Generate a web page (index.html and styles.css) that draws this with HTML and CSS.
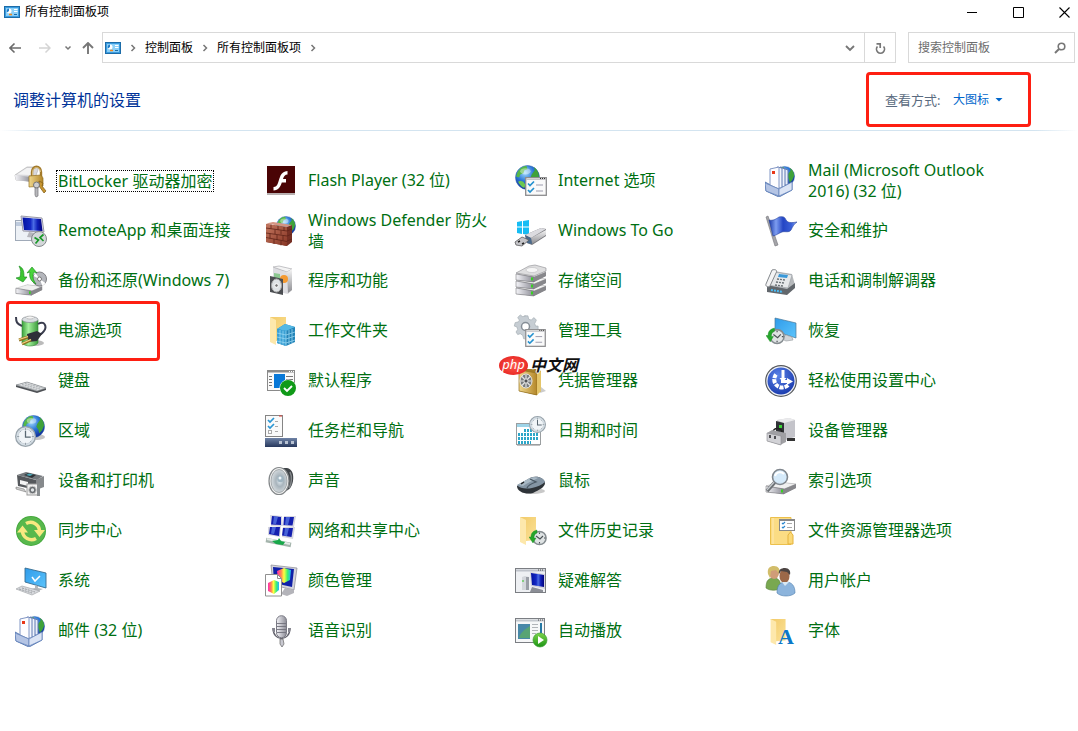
FILE: index.html
```html
<!DOCTYPE html>
<html lang="zh-CN">

<head>
  <meta charset="UTF-8">
  <meta name="viewport" content="width=device-width, initial-scale=1.0">
  <title>所有控制面板项</title>
  <link rel="stylesheet" href="styles.css">
</head>

<body>
  <!-- shared gradients and symbols -->
  <svg class="defs" aria-hidden="true">
    <defs>
      <linearGradient id="metal" x1="0" y1="0" x2="0" y2="1"><stop offset="0" stop-color="#f6f6f6"/><stop offset="1" stop-color="#8c8c90"/></linearGradient>
      <linearGradient id="metal-h" x1="0" y1="0" x2="1" y2="0"><stop offset="0" stop-color="#f4f4f8"/><stop offset="1" stop-color="#8a8a94"/></linearGradient>
      <linearGradient id="screen" x1="0" y1="0" x2="1" y2="0"><stop offset="0" stop-color="#0212a0"/><stop offset=".4" stop-color="#1428c4"/><stop offset=".55" stop-color="#4a6ce4"/><stop offset=".75" stop-color="#1020b8"/><stop offset="1" stop-color="#02027c"/></linearGradient>
      <linearGradient id="sky" x1="0" y1="0" x2="1" y2="1"><stop offset="0" stop-color="#2f9bea"/><stop offset="1" stop-color="#5cc4fb"/></linearGradient>
      <linearGradient id="gold" x1="0" y1="0" x2="1" y2="0"><stop offset="0" stop-color="#f0d78c"/><stop offset="1" stop-color="#b38628"/></linearGradient>
      <linearGradient id="fold" x1="0" y1="0" x2="1" y2="1"><stop offset="0" stop-color="#f2ca68"/><stop offset="1" stop-color="#fbe298"/></linearGradient>
      <linearGradient id="green" x1="0" y1="0" x2="1" y2="0"><stop offset="0" stop-color="#3aa03a"/><stop offset=".4" stop-color="#a4f09c"/><stop offset="1" stop-color="#3c9c3c"/></linearGradient>
      <linearGradient id="flag" x1="0" y1="0" x2="1" y2="0"><stop offset="0" stop-color="#1c3aa8"/><stop offset=".25" stop-color="#7d9df0"/><stop offset=".5" stop-color="#2446c4"/><stop offset=".8" stop-color="#3a60d8"/><stop offset="1" stop-color="#8aa6f0"/></linearGradient>
      <linearGradient id="bar" x1="0" y1="0" x2="0" y2="1"><stop offset="0" stop-color="#6f83a6"/><stop offset="1" stop-color="#26375c"/></linearGradient>
      <linearGradient id="hue" x1="0" y1="0" x2="1" y2="0"><stop offset="0" stop-color="#ff28b4"/><stop offset=".3" stop-color="#ff8a50"/><stop offset=".5" stop-color="#ffff40"/><stop offset=".75" stop-color="#40f070"/><stop offset="1" stop-color="#20b4ff"/></linearGradient>
      <linearGradient id="play" x1="0" y1="0" x2="0" y2="1"><stop offset="0" stop-color="#7bd34a"/><stop offset="1" stop-color="#1c9414"/></linearGradient>
      <linearGradient id="brick" x1="0" y1="0" x2="1" y2="1"><stop offset="0" stop-color="#c47860"/><stop offset="1" stop-color="#873524"/></linearGradient>
      <radialGradient id="sea" cx=".4" cy=".3" r=".7"><stop offset="0" stop-color="#a5dcfc"/><stop offset=".5" stop-color="#2c78d8"/><stop offset="1" stop-color="#10309a"/></radialGradient>
      <radialGradient id="ease" cx=".4" cy=".3" r=".8"><stop offset="0" stop-color="#5a82e8"/><stop offset="1" stop-color="#1434a8"/></radialGradient>
      <radialGradient id="cone" cx=".55" cy=".5" r=".6"><stop offset="0" stop-color="#e4eef4"/><stop offset=".4" stop-color="#a8b4bc"/><stop offset="1" stop-color="#e0e4e6"/></radialGradient>
    </defs>
    <symbol id="globe" viewBox="0 0 24 24">
      <circle cx="12" cy="12" r="11.500" fill="url(#sea)" stroke="#2b5aa8" stroke-width=".5"/>
      <path d="M2 8C4 3 8 1 11 1l1 3-3 1-1 3-3 1-1 3-3-1z" fill="#56b848"/>
      <path d="M16 9l3-4-1-3c3 2 5 5 5 9l-2 5-3 3-1-4-2-3z" fill="#3fa23a"/>
      <path d="M5 15l3 1 2 3-1 3c-3-1-5-4-6-6z" fill="#6cc850"/>
      <ellipse cx="10" cy="6" rx="5" ry="3" fill="#fff" opacity=".4"/>
    </symbol>
    <symbol id="clock" viewBox="0 0 20 20">
      <circle cx="10" cy="10" r="9.400" fill="#d6dfe6" stroke="#98a3ab" stroke-width="1.200"/>
      <circle cx="10" cy="10" r="7" fill="#f1f5f8" stroke="#c0c9d0" stroke-width=".6"/>
      <path d="M10 2v2M10 16v2M2 10h2M16 10h2M4.500 4.500l1 1M15.500 4.500l-1 1M4.500 15.500l1-1M15.500 15.500l-1-1" stroke="#8c969e" stroke-width=".8"/>
      <path d="M10 4.500V10.500H15" fill="none" stroke="#5a6872" stroke-width="1.200"/>
    </symbol>
    <symbol id="small-clock" viewBox="0 0 18 18">
      <circle cx="10.500" cy="10" r="6.600" fill="#dfe3e4" stroke="#858c90" stroke-width="1.500"/>
      <path d="M10.500 4.500v1.500M10.500 14v1.500M15 10h1.500M7 8l4 3 3-3" fill="none" stroke="#4a5054" stroke-width="1.100"/>
      <path d="M8 2C4 3 2 5 2 9H0l4 6 3-5H5c0-3 1-4 3-5z" fill="#26a52c" stroke="#188a20" stroke-width=".4"/>
    </symbol>
    <symbol id="folder" viewBox="0 0 20 30">
      <path d="M1 1H17V24L7 25z" fill="url(#fold)"/>
      <path d="M1 1l6 3V29L1 26z" fill="#fde8ac"/>
    </symbol>
    <symbol id="drive" viewBox="0 0 32 14">
      <path d="M1 6L14 1 31 3v4L19 13 1 11z" fill="#a2a2a6"/>
      <path d="M1 5L14 1 31 3 19 8z" fill="#f0f0f0" stroke="#b0b0b2" stroke-width=".5"/>
      <path d="M1 5L19 8V13L1 11z" fill="url(#metal-h)" stroke="#68686c" stroke-width=".5"/>
      <path d="M19 8L31 3V7L19 13z" fill="#87878b"/>
      <rect x="16" y="8.500" width="2" height="3" fill="#38d022"/>
    </symbol>
    <symbol id="checks" viewBox="0 0 22 19">
      <rect x=".7" y=".7" width="20.600" height="17.600" fill="#fafafa" stroke="#8c8c8e" stroke-width="1.300"/>
      <path d="M1 2.500H21" stroke="#c4c4c8"/>
      <path d="M15 1.500h1M17 1.500h1M19 1.500h1" stroke="#333"/>
      <path d="M3 6.500l2 2 4-4M3 13l2 2 4-4" fill="none" stroke="#2491cf" stroke-width="1.700"/>
      <path d="M11 8h7M11 14h7" stroke="#9a9aac"/>
    </symbol>
    <symbol id="mail" viewBox="0 0 32 32">
      <svg x="9" y="0" width="21" height="23"><use href="#globe"/></svg>
      <path d="M0 17L15 25 27 18V25L14 32 1 26z" fill="#c0cee8" stroke="#5f7fb8"/>
      <path d="M18 3l5 2V20H17z" fill="#e8eefa" stroke="#5f78b0"/>
      <path d="M15 2l5 2V22H14z" fill="#eef3fc" stroke="#5f78b0"/>
      <path d="M12 2l5 1V23H11z" fill="#f4f7fd" stroke="#5f78b0"/>
      <path d="M5 4L14 2V24L5 20z" fill="#fdfdff" stroke="#8196c4"/>
      <rect x="7" y="6" width="3" height="3" fill="#e83818"/>
      <path d="M0 18L14 24V31L1 26z" fill="#b4c4e4" stroke="#5f7fb8" stroke-width=".7"/>
      <path d="M14 24L27 17V25L14 31z" fill="#dbe4f5" stroke="#5f7fb8" stroke-width=".7"/>
    </symbol>
    <symbol id="panel" viewBox="0 0 16 12">
      <rect x=".5" y=".5" width="15" height="11" fill="#7cc8f4" stroke="#1c6ca8"/>
      <rect x="1.500" y="1.500" width="13" height="9" fill="#8cd0f8" stroke="#3a9ce0"/>
      <circle cx="5" cy="5" r="2.500" fill="#fff"/>
      <path d="M5 5V2.500A2.500 2.500 0 0 0 3 6.500z" fill="#1d7cc8"/>
      <path d="M5 8.500h3" stroke="#f28a1c" stroke-width="1.500"/>
      <path d="M10 3.500h3.500M10 5.500h3.500" stroke="#fff"/>
      <path d="M10 8.500h3" stroke="#1c6ca8"/>
    </symbol>
    <symbol id="chevron" viewBox="0 0 8 8">
      <path d="M2.500 1L5.500 4L2.500 7" fill="none" stroke="#777" stroke-width="1.500"/>
    </symbol>
  </svg>

  <div class="titlebar">
    <svg class="panel-icon"><use href="#panel"/></svg>
    <h1>所有控制面板项</h1>
    <div class="window-buttons">
      <button type="button" aria-label="最小化"><svg viewBox="0 0 11 11"><path d="M0 5.500H10" stroke="#000"/></svg></button>
      <button type="button" aria-label="最大化"><svg viewBox="0 0 11 11"><path d="M.5 .5H10.500V10.500H.5z" fill="none" stroke="#000"/></svg></button>
      <button type="button" aria-label="关闭"><svg viewBox="0 0 11 11"><path d="M.5 .5L10.500 10.500M10.500 .5L.5 10.500" stroke="#000" stroke-width="1.100"/></svg></button>
    </div>
  </div>

  <nav class="toolbar">
    <div class="history">
      <button type="button" class="back" aria-label="后退"><svg viewBox="0 0 12 12"><path d="M12 6H1M5.500 1.500L1 6L5.500 10.500" fill="none" stroke="#6c6c6c" stroke-width="1.600"/></svg></button>
      <button type="button" aria-label="前进"><svg viewBox="0 0 12 12"><path d="M0 6H11M6.500 1.500L11 6L6.500 10.500" fill="none" stroke="#d4d4d4" stroke-width="1.500"/></svg></button>
      <button type="button" class="recent" aria-label="最近位置"><svg viewBox="0 0 12 12"><path d="M3.500 4.500L6 7L8.500 4.500" fill="none" stroke="#777" stroke-width="1.500"/></svg></button>
      <button type="button" aria-label="上移"><svg viewBox="0 0 12 12"><path d="M6 12V1M1 6L6 1L11 6" fill="none" stroke="#777" stroke-width="1.900"/></svg></button>
    </div>
    <div class="address">
      <svg class="panel-icon"><use href="#panel"/></svg>
      <svg class="chevron"><use href="#chevron"/></svg>
      <a href="#">控制面板</a>
      <svg class="chevron"><use href="#chevron"/></svg>
      <a href="#">所有控制面板项</a>
      <svg class="chevron"><use href="#chevron"/></svg>
      <button type="button" class="drop" aria-label="历史记录"><svg viewBox="0 0 12 12"><path d="M2 4L6 8L10 4" fill="none" stroke="#777" stroke-width="1.900"/></svg></button>
      <button type="button" class="refresh" aria-label="刷新"><svg viewBox="0 0 12 12"><path d="M3.500 4.500A4 4 0 1 0 9.500 4.500" fill="none" stroke="#777" stroke-width="1.700"/><path d="M2.500 1.800H6.200V6" fill="none" stroke="#777" stroke-width="1.700"/></svg></button>
    </div>
    <form class="search">
      <input type="text" placeholder="搜索控制面板" aria-label="搜索控制面板">
      <button type="button" aria-label="搜索"><svg viewBox="0 0 12 12"><circle cx="7.500" cy="4.500" r="3.300" fill="none" stroke="#777" stroke-width="1.600"/><path d="M5 7L1 11" stroke="#777" stroke-width="2"/></svg></button>
    </form>
  </nav>

  <header class="heading">
    <h2>调整计算机的设置</h2>
    <div class="view-by">
      <label for="view">查看方式:</label>
      <select id="view">
        <option>大图标</option>
        <option>小图标</option>
        <option>类别</option>
      </select>
    </div>
  </header>

  <main class="items">
    <a class="item focused" href="#">
      <svg class="icon" viewBox="0 0 32 32"><path d="M0 10L12 2H24L19 16 1 15z" fill="#d8d8dc" stroke="#aaa" stroke-width=".6"/><path d="M0 10l16 2v5L1 15z" fill="url(#metal-h)"/><path d="M2 9.500L12 3h8l-4 7z" fill="#f3f3f4"/><path d="M17 12V7c0-7 9-7 9 0v5" fill="none" stroke="#a37a2a" stroke-width="2.400"/><path d="M17.500 12V7c0-6 8-6 8 0" fill="none" stroke="#e4cd90" stroke-width=".8"/><path d="M14 11l12-1 2 3v8l-14 1z" fill="url(#gold)" stroke="#94701f" stroke-width=".7"/><path d="M24 16l4 2-1 3 4 5-2 2-5-7z" fill="#c79530" stroke="#7c5a14" stroke-width=".7"/><circle cx="21.500" cy="20" r="3" fill="#cfcfcf" stroke="#747478"/><path d="M20 23h3v8l-2 1-1-2z" fill="#b8b8bc" stroke="#747478" stroke-width=".7"/></svg>
      <span>BitLocker 驱动器加密</span>
    </a>
    <a class="item" href="#">
      <svg class="icon" viewBox="0 0 32 32"><rect x="2" y="2" width="28" height="28" fill="#b8b0b0"/><rect x="2" y="1" width="28" height="27" fill="#4a0405"/><path d="M22.500 6C15 6.500 15 13 13 18c-1 2.500-2 4-4.500 4v3.500c5-.2 7-4 8.300-8H21V14h-3c1-3 2-4.400 4.500-4.500z" fill="#fff"/></svg>
      <span>Flash Player (32 位)</span>
    </a>
    <a class="item" href="#">
      <svg class="icon" viewBox="0 0 32 32"><use href="#globe" width="25" height="25"/><use href="#checks" x="10" y="12" width="22" height="19"/></svg>
      <span>Internet 选项</span>
    </a>
    <a class="item" href="#">
      <svg class="icon" viewBox="0 0 32 32"><use href="#mail"/></svg>
      <span>Mail (Microsoft Outlook 2016) (32 位)</span>
    </a>

    <a class="item" href="#">
      <svg class="icon" viewBox="0 0 32 32"><rect x=".5" y="5.500" width="22" height="20" fill="#edf1f6" stroke="#a0aab8"/><path d="M1 8h7M1 10h7" stroke="#8fa4c4"/><path d="M6 1L27 3 29 17 8 16z" fill="#dde" stroke="#9a9aa6"/><path d="M7.500 2.500L26 4 27.500 16 9 15z" fill="url(#screen)"/><path d="M14 17l6 1v5l-8-1z" fill="#b6b6bc"/><circle cx="24" cy="24" r="7.500" fill="#d4d8da" stroke="#85898c"/><path d="M19.500 22.500l4 2.500-3 3.500M28.500 19.500l-3.500 3 3.500 3.500" fill="none" stroke="#189828" stroke-width="1.700"/></svg>
      <span>RemoteApp 和桌面连接</span>
    </a>
    <a class="item" href="#">
      <svg class="icon" viewBox="0 0 32 32"><use href="#globe" x="11" y="1" width="20" height="20"/><path d="M1 9L21 12 27 10V27L22 31 1 27z" fill="#763024"/><path d="M1 9L22 12V31L1 27z" fill="url(#brick)"/><path d="M1 8.500L8 7 27 10 22 12z" fill="#d49482"/><path d="M1 13l21 3M1 18l21 3M1 22.500l21 4M6 9.500v4M13 11v4M19 12v4M10 14.500v4.500M16 15.500v4M5 18.500v5M12 20v5M18 20.500v5M9 24v5M16 25.500v5M22 16l5-2M22 21l5-2M22 26l5-2" stroke="#5f2318" stroke-width=".8"/></svg>
      <span>Windows Defender 防火墙</span>
    </a>
    <a class="item" href="#">
      <svg class="icon" viewBox="0 0 32 32"><path d="M2 7l5-1v5.500H2zM8 6l6-1v6.500H8zM2 12.500h5V19l-5-1zM8 12.500h6V20l-6-1z" fill="#16bdf4"/><path d="M10 20L26 13l5 1v7l-14 9-5-2z" fill="#77777c"/><path d="M10 20L26 13l5 1-15 9z" fill="#dcdce0"/><path d="M16 23l15-8v5l-14 9z" fill="url(#metal)"/><path d="M10 20l6 3 1 6-5-1z" fill="#4a6a8c"/><path d="M0 27l7-5 7 3-7 6-6-1z" fill="#c4c4c8" stroke="#5d5d60" stroke-width=".8"/><path d="M3 27l2-1M7 29l2-1" stroke="#222" stroke-width="1.500"/></svg>
      <span>Windows To Go</span>
    </a>
    <a class="item" href="#">
      <svg class="icon" viewBox="0 0 32 32"><path d="M1 2l2-1 10 29-3 1z" fill="#a4a4a8" stroke="#74747a" stroke-width=".6"/><path d="M4 5c4 1 7-1 10-3 4-1 6 0 7 3 2 3 5 3 11 2-3 2-4 4-6 8-2 3-6 1-9 2-3 1-5 3-9 4z" fill="url(#flag)" stroke="#23409c" stroke-width=".6"/></svg>
      <span>安全和维护</span>
    </a>

    <a class="item" href="#">
      <svg class="icon" viewBox="0 0 32 32"><use href="#drive" y="18" width="28" height="14"/><circle cx="24.500" cy="14" r="7" fill="#b4b6bc" stroke="#808084"/><path d="M24.500 14l-6-3 2-3zM24.500 14l6 4-3 3z" fill="#fff"/><circle cx="24.500" cy="14" r="2" fill="#fff" stroke="#777"/><path d="M4 1c5 2 5 7 5 11h3L8 17 1 13l4-1c1-4 1-7-1-11z" fill="#3cc630" stroke="#14861a" stroke-width=".6"/><path d="M17 2l5 6-3-1c-2 4-1 8 2 12-6-3-7-8-6-12l-3 1z" fill="#4ad43c" stroke="#14861a" stroke-width=".6"/></svg>
      <span>备份和还原(Windows 7)</span>
    </a>
    <a class="item" href="#">
      <svg class="icon" viewBox="0 0 32 32"><path d="M8 3L18 2l9 3v20l-4 4-9-2z" fill="#dcdce0"/><path d="M8 2L14 1 27 4 22 7z" fill="#f4f4f4" stroke="#a0a0a4" stroke-width=".6"/><path d="M22 7l5-3v21l-4 3z" fill="url(#metal)"/><path d="M8 4l14 3v19l-14-3z" fill="#dedee2"/><path d="M9 8l6 1v6H9z" fill="#8cc890"/><circle cx="19" cy="14" r="4" fill="#f49a32"/><path d="M5 11l13 3v16l-13-3z" fill="#4c4e52"/><ellipse cx="11.500" cy="20.500" rx="5" ry="6.500" fill="#dfe3e5" stroke="#aaa"/><circle cx="11.500" cy="20.500" r="1.800" fill="#777" stroke="#fff"/></svg>
      <span>程序和功能</span>
    </a>
    <a class="item" href="#">
      <svg class="icon" viewBox="0 0 32 32"><use href="#drive" y="18" width="32" height="14"/><use href="#drive" y="11" width="32" height="14"/><use href="#drive" y="4" width="32" height="14"/><path d="M1 8L14 1 20 0 31 3V6L19 11z" fill="#dededf" stroke="#8c8c90" stroke-width=".6"/><ellipse cx="17" cy="5" rx="6" ry="2.500" fill="#f6f6f6" stroke="#b4b4b8" stroke-width=".5"/></svg>
      <span>存储空间</span>
    </a>
    <a class="item" href="#">
      <svg class="icon" viewBox="0 0 32 32"><path d="M9 6L27 9l3 11-9 8-19-4z" fill="#b6b9bc"/><path d="M2 20l20 4 8-6v5l-8 7-20-3z" fill="#62676c"/><path d="M9 7l18 3-4 13L2 20z" fill="#e6e8ea" stroke="#989da2" stroke-width=".6"/><path d="M7 5c3-1 6 0 4 3L5 21c-2 2-5 0-4-2z" fill="#f4f4f5" stroke="#84888c"/><path d="M14 9l9 1-1 3-9-1z" fill="#3a98d8"/><path d="M12 14l8 1M11 17l8 1M10 20l8 1" stroke="#6d7478" stroke-width="1.400" stroke-dasharray="2 1"/><path d="M6 25l12 2" stroke="#4cbcf4" stroke-width="2" stroke-dasharray="2 1"/></svg>
      <span>电话和调制解调器</span>
    </a>

    <a class="item marked" href="#">
      <svg class="icon" viewBox="0 0 32 32"><ellipse cx="20" cy="28" rx="9" ry="3" fill="#bbb"/><path d="M7 5H23V28C20 32 10 32 7 28z" fill="url(#green)" stroke="#348c38" stroke-width=".6"/><ellipse cx="15" cy="4.500" rx="8" ry="3" fill="#d9dde0" stroke="#858b90" stroke-width=".7"/><ellipse cx="15" cy="2.500" rx="4" ry="1.500" fill="#f4f4f4" stroke="#999" stroke-width=".5"/><path d="M1 2c0 5 1 7 6 9M23 9c7-4 9 3 6 7-1 2-3 3-5 4" fill="none" stroke="#3a3d4e" stroke-width="2"/><path d="M12 19l10-3 5 3-5 7-9 1z" fill="#2e3038"/><path d="M4 25l9-3M7 29l9-4" stroke="#92701e" stroke-width="3"/><path d="M4 24.500l9-3M7 28.500l9-4" stroke="#f0d488" stroke-width="1.300"/></svg>
      <span>电源选项</span>
    </a>
    <a class="item" href="#">
      <svg class="icon" viewBox="0 0 32 32"><use href="#folder" x="4" y="1" width="20" height="30"/><path d="M12 14l8-5 10 3v15l-9 4-9-3z" fill="#2484b8"/><path d="M12 14l8-5 10 3-9 4z" fill="#54b8e4"/><path d="M12 14l9 2v15l-9-3z" fill="#3aa0d4"/><path d="M12 18l9 2 9-3M12 22l9 2 9-3M12 26l9 2 9-3M15 15v14M18 15.500v14M24 15v14M27 14v14M21 16v15" fill="none" stroke="#a0dcf6" stroke-width=".7"/></svg>
      <span>工作文件夹</span>
    </a>
    <a class="item" href="#">
      <svg class="icon" viewBox="0 0 32 32"><path d="M10 1h4l1 4 3 1 3-3 3 3-2 4 1 3h3v4l-3 1-2 3 2 3-3 2-4-2-3 1-1 3h-3l-1-4-3-2-3 1-2-3 2-3-1-3-3-1 1-4 4-1 1-2-2-3 3-3 3 2 3-1z" transform="translate(1 0) scale(.85)" fill="#c6cdd3" stroke="#a4acb3" stroke-width=".8"/><circle cx="10.500" cy="11.500" r="4" fill="#fff" stroke="#858e96" stroke-width="1.500"/><use href="#checks" x="9" y="14" width="23" height="18"/></svg>
      <span>管理工具</span>
    </a>
    <a class="item" href="#">
      <svg class="icon" viewBox="0 0 32 32"><path d="M10 3L31 8V23L10 16z" fill="url(#sky)" stroke="#4a7898" stroke-width=".7"/><path d="M21 20l6 2 1 3-7 1-4-2z" fill="#d0d4d8" stroke="#959a9e" stroke-width=".6"/><use href="#small-clock" x="1" y="11" width="19" height="19"/></svg>
      <span>恢复</span>
    </a>

    <a class="item" href="#">
      <svg class="icon" viewBox="0 0 32 32"><path d="M1 20l11-3 19 6v2l-9 3L1 22z" fill="#4d5054"/><path d="M1 20l11-3 19 6-9 3z" fill="#dcdee0" stroke="#8a8e92" stroke-width=".6"/><path d="M4 20.500l18 4.500M7 19.500l18 4.500M10 18.500l18 4.500" stroke="#a6aaae" stroke-width=".9" stroke-dasharray="2 .8"/></svg>
      <span>键盘</span>
    </a>
    <a class="item" href="#">
      <svg class="icon" viewBox="0 0 32 32"><rect x="2.500" y="5.500" width="27" height="20" fill="#fafafa" stroke="#8a8a8a"/><path d="M2 6.500h28" stroke="#8a8a8a" stroke-width="2"/><path d="M24 6.500h1M26 6.500h1M28 6.500h1" stroke="#fff"/><path d="M4 11.500h3M4 14.500h3M4 17.500h3M4 20.500h3M21 11.500h7M21 14.500h7" stroke="#777"/><rect x="9" y="9" width="11" height="14" fill="#0878d8"/><circle cx="23" cy="23" r="8.500" fill="#fff"/><circle cx="23" cy="23" r="8" fill="#109a18"/><path d="M19 23l3 3 5-5" fill="none" stroke="#fff" stroke-width="1.900"/></svg>
      <span>默认程序</span>
    </a>
    <a class="item" href="#">
      <svg class="icon" viewBox="0 0 32 32"><path d="M26 22l5 4-6 2z" fill="#ccc"/><path d="M4 4H22l4 2v20l-5 4-17-4z" fill="#a27d26"/><path d="M4 5l18 3v22L4 26z" fill="url(#gold)" stroke="#94701f" stroke-width=".7"/><path d="M22 8l4-2v20l-4 4z" fill="#e4c56a"/><ellipse cx="11" cy="16" rx="6" ry="7" fill="#777b7d" stroke="#e8e8e8"/><path d="M11 10v12M5.500 16h11M7 11.500l8 9M15 11.500l-8 9" stroke="#e4e4e4" stroke-width="1.200"/><circle cx="11" cy="16" r="2" fill="#505356" stroke="#fff" stroke-width=".6"/></svg>
      <span>凭据管理器</span>
    </a>
    <a class="item" href="#">
      <svg class="icon" viewBox="0 0 32 32"><circle cx="16" cy="16" r="15.300" fill="#f0f2f8" stroke="#55585c" stroke-width="1.200"/><circle cx="16" cy="16" r="13.500" fill="url(#ease)"/><path d="M11 9.500A8 8 0 1 0 23.500 19.500" fill="none" stroke="#fff" stroke-width="4" stroke-dasharray="4 1"/><path d="M16.500 5h3v8h2l-3.500 4-3.500-4h2z" fill="#fff"/><path d="M16 15h6v-2l6 3.500-6 3.500v-2h-6z" fill="#fff"/></svg>
      <span>轻松使用设置中心</span>
    </a>

    <a class="item" href="#">
      <svg class="icon" viewBox="0 0 32 32"><ellipse cx="22" cy="22" rx="8" ry="3" fill="#c4c4c4"/><use href="#globe" x="7" y="0" width="23" height="23"/><use href="#clock" x="0" y="11" width="21" height="21"/></svg>
      <span>区域</span>
    </a>
    <a class="item" href="#">
      <svg class="icon" viewBox="0 0 32 32"><rect x=".5" y=".5" width="17" height="21" fill="#fafafa" stroke="#858585"/><path d="M14 1h3" stroke="#d83a32"/><path d="M3 5l2 2 4-4M3 11l2 2 4-4" fill="none" stroke="#2a96d4" stroke-width="1.700"/><path d="M10 6.500h3M10 11.500h3M10 16.500h3" stroke="#aaa"/><rect x="3.500" y="15.500" width="3" height="3" fill="#fff" stroke="#aaa"/><rect y="23" width="32" height="9" fill="url(#bar)"/><path d="M14 27.500h3M20 27.500h3M26 27.500h3" stroke="#b8c2d2" stroke-width="3"/></svg>
      <span>任务栏和导航</span>
    </a>
    <a class="item" href="#">
      <svg class="icon" viewBox="0 0 32 32"><rect x="1.500" y="8.500" width="24" height="21" fill="#fff" stroke="#9a9ea0"/><path d="M2 30.500h23" stroke="#c2c2c2"/><rect x="2" y="9" width="23" height="3" fill="#9ed4e8"/><path d="M9 15.500h13M3 19.500h20M3 23.500h20M3 27.500h13" stroke="#2ca6c8" stroke-width="3" stroke-dasharray="2 1"/><use href="#clock" x="14" y="1" width="17" height="17"/></svg>
      <span>日期和时间</span>
    </a>
    <a class="item" href="#">
      <svg class="icon" viewBox="0 0 32 32"><path d="M12 5l12-2 6 2v16l-8 4-10-4z" fill="#d0d0d4"/><path d="M19 8l11-3v17l-11 3z" fill="#c4c4ca"/><path d="M12 5l12-2 6 2-11 3z" fill="#eaeaec"/><path d="M11 6l8 2v12l-8-2z" fill="#303236"/><rect x="14" y="10" width="3" height="3" fill="#3cd438"/><path d="M22 23h8v3h-8z" fill="#333"/><path d="M8 17c0-5 9-4 9 0" fill="none" stroke="#222" stroke-width="1.500"/><path d="M2 18l5-3 14 3v9l-6 3-13-4z" fill="#a0a0a4"/><path d="M2 18l14 3v9L2 26z" fill="#d2d2d6" stroke="#8b8b90" stroke-width=".6"/><path d="M5 20v3M10 21v3" stroke="#4c4c50" stroke-width="2"/></svg>
      <span>设备管理器</span>
    </a>

    <a class="item" href="#">
      <svg class="icon" viewBox="0 0 32 32"><path d="M2 10L11 7 28 11 22 15z" fill="#74787c"/><path d="M2 10l19 5v10L3 21z" fill="#55585c"/><path d="M21 15l8-4v11l-8 3z" fill="#86898c"/><path d="M9 10l4-2 8 2-4 3z" fill="#2f3438"/><path d="M11 10l3-1.500 4 1-3 1.500z" fill="#4ca8b8"/><path d="M5 15l8 2v4l-8-2z" fill="#f4f4f4"/><path d="M1 22l8 2 2 3-10-3z" fill="#d0d0d0" stroke="#666" stroke-width=".5"/><rect x="12" y="19" width="12" height="11" fill="#f0f0f0" stroke="#999"/><rect x="22" y="18" width="3" height="13" fill="#898d90"/><circle cx="17.500" cy="25" r="3.800" fill="#686c70" stroke="#ccc"/><circle cx="17.500" cy="25" r="1.700" fill="#e0e4e6"/></svg>
      <span>设备和打印机</span>
    </a>
    <a class="item" href="#">
      <svg class="icon" viewBox="0 0 32 32"><path d="M14 3h8c5 1 7 6 6 13-1 6-4 9-7 10l-5 2z" fill="#404448"/><path d="M25 7c2 4 2 12-1 16" fill="none" stroke="#85898c" stroke-width="1.500"/><ellipse cx="14" cy="16" rx="10" ry="13.500" fill="#f0f0f0" stroke="#84888a" stroke-width="1.200"/><ellipse cx="14" cy="16" rx="8" ry="11.500" fill="url(#cone)" stroke="#8a9094" stroke-width=".7"/><circle cx="15.500" cy="14" r="3.200" fill="#9fb4c0"/><circle cx="15" cy="13" r="1.500" fill="#eef6fa"/></svg>
      <span>声音</span>
    </a>
    <a class="item" href="#">
      <svg class="icon" viewBox="0 0 32 32"><ellipse cx="18" cy="26" rx="12" ry="3" fill="#c8c8c8"/><path d="M2 21L15 13c7-3 14 0 15 5 0 4-6 7-12 10C11 30 2 27 2 21z" fill="#2e3338"/><path d="M2 20L15 13c7-3 14 0 15 4-3 3-8 5-13 6C12 24 5 24 2 20z" fill="#8495a4"/><path d="M4 19l11-6c3-1 6-1 8 0-4 2-11 5-15 8-2 0-4-1-4-2z" fill="#a8b8c4"/><path d="M12 23c1-3 6-5 9-6l-6-3" fill="none" stroke="#4a5864" stroke-width="1.300"/><path d="M6 19l3-2" stroke="#222" stroke-width="1.500"/></svg>
      <span>鼠标</span>
    </a>
    <a class="item" href="#">
      <svg class="icon" viewBox="0 0 32 32"><use href="#drive" y="16" width="32" height="14"/><path d="M10 17l-8 9" stroke="#6c7074" stroke-width="3.500"/><path d="M10 16l-8 9" stroke="#c8ccd0" stroke-width="1.200"/><circle cx="15" cy="12" r="7.500" fill="#d0e8fa" fill-opacity=".9" stroke="#80878e" stroke-width="1.600"/><path d="M10 11c1-4 6-5 9-2" fill="none" stroke="#fff" stroke-width="2"/></svg>
      <span>索引选项</span>
    </a>

    <a class="item" href="#">
      <svg class="icon" viewBox="0 0 32 32"><circle cx="16" cy="16" r="15" fill="#45a83d"/><circle cx="16" cy="16" r="14" fill="#58b84c"/><path d="M11 8.500A9 9 0 0 1 24.500 16" fill="none" stroke="#f8e880" stroke-width="3.500"/><path d="M21 23.500A9 9 0 0 1 7.500 16" fill="none" stroke="#f8e880" stroke-width="3.500"/><path d="M2 17.500h11L7.500 10.500zM19 15h11l-5.500 7z" fill="#f8e880"/></svg>
      <span>同步中心</span>
    </a>
    <a class="item" href="#">
      <svg class="icon" viewBox="0 0 32 32"><path d="M5 0l12 1 1 10-12 0zM19 1l12 0-2 11-11-1zM3 12l13-1-1 11-12-2zM18 12l12 0-2 12-11-2z" fill="#d6d6e0"/><path d="M7 1l9 1v8l-10-.5zM19 2l10 0-1.500 8.500-9-.5zM5 12l10 0-1 9-10-2zM18 13l10 0-1.500 9-9.500-1.500z" fill="#1420b0"/><path d="M9 1.500l4 .3L11 9l-3-.2zM21 2l4 0-2 8-3 0zM7 12l4 0-2 7-3-.5zM20 13l4 0-2 8-3-.5z" fill="#5c80e8" opacity=".7"/><path d="M1 25l25 5" stroke="#a4b4ac" stroke-width="4.500"/><path d="M2 24l23 5" stroke="#e4ece8" stroke-width="2"/><path d="M7 26l6-1 1-2 2 3 4 1-2 3-7-1z" fill="#18a84a"/></svg>
      <span>网络和共享中心</span>
    </a>
    <a class="item" href="#">
      <svg class="icon" viewBox="0 0 32 32"><use href="#folder" x="4" y="1" width="20" height="30"/><use href="#small-clock" x="14" y="13" width="18" height="18"/></svg>
      <span>文件历史记录</span>
    </a>
    <a class="item" href="#">
      <svg class="icon" viewBox="0 0 32 32"><path d="M5.500 2.500H26V29.500H5.500z" fill="#fbdc84" stroke="#ecc04c"/><path d="M8 3v26" stroke="#ffeab4"/><path d="M23 29V20l2.500-3 2.500 3v9z" fill="#fbd978" stroke="#e4b33c"/><rect x="14.500" y="4.500" width="15" height="11" fill="#fff" stroke="#888"/><path d="M14 5h16" stroke="#888" stroke-width="2"/><path d="M17 8l1 1 2-2M17 12l1 1 2-2" fill="none" stroke="#2a88d0" stroke-width="1.200"/><path d="M22 8.500h5M22 12.500h5" stroke="#aaa"/></svg>
      <span>文件资源管理器选项</span>
    </a>

    <a class="item" href="#">
      <svg class="icon" viewBox="0 0 32 32"><path d="M10 3L31 8V23L10 17z" fill="url(#sky)" stroke="#376c90" stroke-width=".9"/><path d="M17 12l3 4 5-5" fill="none" stroke="#fff" stroke-width="1.500"/><path d="M20 20l3 1v2l5 1-5 2-7-2 4-1z" fill="#b4b8bc"/><path d="M1 24l6-3 18 5-8 4z" fill="#d8dade" stroke="#989ca0" stroke-width=".6"/><path d="M4 24l13 4M7 23l13 4" stroke="#9ca0a4" stroke-dasharray="2 1"/></svg>
      <span>系统</span>
    </a>
    <a class="item" href="#">
      <svg class="icon" viewBox="0 0 32 32"><path d="M6 0L32 3 29 25 8 20z" fill="#d4d4dc" stroke="#8a8a92" stroke-width=".7"/><path d="M8 2L29 4 27 22 9 18z" fill="#1020a8"/><path d="M12 6l7-3 7 2-1 10-6 3-6-3z" fill="url(#hue)"/><path d="M20 23l9 2v3l-7 3-6-2z" fill="#b4b4ba"/><path d="M.5 9.500h12l4 4v17.500H.5z" fill="#fff" stroke="#909090"/><path d="M12.500 9.500v4h4" fill="none" stroke="#909090"/><path d="M3 18l6-3 5 2v8l-5 4-6-3z" fill="url(#hue)"/></svg>
      <span>颜色管理</span>
    </a>
    <a class="item" href="#">
      <svg class="icon" viewBox="0 0 32 32"><rect x=".5" y="3.500" width="30" height="24" fill="#eef0f3" stroke="#7b7e83"/><path d="M1 5.500h29" stroke="#bfc3ca" stroke-width="2"/><path d="M23 5h1M25 5h1M27 5h1" stroke="#444"/><path d="M15 7L30 9V24L16 21z" fill="#d4d4dc"/><path d="M16 8l13 2v12l-12-2z" fill="url(#screen)"/><path d="M7 12l3-1 4 1v13H7z" fill="#d4d7dc"/><path d="M11 12l3 0v13h-3z" fill="#9a9ea6"/><path d="M8 15v2" stroke="#34c224"/><path d="M17 22l11 3v2H15z" fill="#8b8e96"/></svg>
      <span>疑难解答</span>
    </a>
    <a class="item" href="#">
      <svg class="icon" viewBox="0 0 32 32"><path d="M1 23c0-8 3-10 8-10s7 4 7 10c-4 3-11 3-15 0z" fill="#79a850" stroke="#55803a" stroke-width=".6"/><ellipse cx="9" cy="8" rx="5" ry="6" fill="#d09c78"/><path d="M3 9C2 3 5 1 9 1s7 3 5 8l-3-4-5 1-1 7z" fill="#d2bd6a"/><path d="M12 28c0-9 4-11 9-11 6 0 9 4 9 11-4 4-14 4-18 0z" fill="#8cb4dc" stroke="#4c7cac" stroke-width=".6"/><ellipse cx="19.500" cy="11" rx="5" ry="7" fill="#9c6848"/><path d="M14 9c-1-4 2-6 6-6s6 3 5 7l-3-3-6-1z" fill="#4c4442"/><path d="M17 17l3 4 4-4z" fill="#d8e8f4"/></svg>
      <span>用户帐户</span>
    </a>

    <a class="item" href="#">
      <svg class="icon" viewBox="0 0 32 32"><use href="#mail"/></svg>
      <span>邮件 (32 位)</span>
    </a>
    <a class="item" href="#">
      <svg class="icon" viewBox="0 0 32 32"><path d="M8 13c0 14 17 14 17 0" fill="none" stroke="#64646e" stroke-width="1.400"/><path d="M7 13h3v4H8zM23 13h3l-1 4h-2z" fill="#85858f"/><rect x="11.500" y=".7" width="10" height="22" rx="5" fill="url(#metal-h)" stroke="#7a7a84"/><path d="M12 8.500h9M12 11.500h9M12 14.500h9M12 17.500h9" stroke="#72727c" stroke-width=".9"/><path d="M15 24h3l1 5-2 3-2-3z" fill="#c8c8d0" stroke="#666" stroke-width=".7"/></svg>
      <span>语音识别</span>
    </a>
    <a class="item" href="#">
      <svg class="icon" viewBox="0 0 32 32"><rect x=".5" y="3.500" width="29" height="24" fill="#f6f7f8" stroke="#7b7e83"/><path d="M1 5.500h28" stroke="#c4c8ce" stroke-width="2"/><path d="M23 5h1M25 5h1M27 5h1" stroke="#444"/><rect x="3" y="9" width="12" height="15" fill="#4888a8"/><path d="M4 23c1-5 6-9 11-12v12z" fill="#58a474"/><path d="M17 9.500h6M17 12.500h6M17 15.500h6M17 18.500h4" stroke="#b0b4b8"/><path d="M26 8v10" stroke="#2678a4" stroke-width="2"/><circle cx="25" cy="25" r="7" fill="url(#play)" stroke="#3a9c30" stroke-width=".7"/><path d="M23 21l6 4-6 4z" fill="#fff"/></svg>
      <span>自动播放</span>
    </a>
    <a class="item" href="#">
      <svg class="icon" viewBox="0 0 32 32"><use href="#folder" x="4" y="3" width="20" height="28"/><text class="font-letter" x="13" y="29">A</text></svg>
      <span>字体</span>
    </a>
  </main>

  <div class="watermark"><span class="oval">php</span><span class="site">中文网</span></div>
</body>

</html>
```
FILE: styles.css
```css
*,
*::before,
*::after {
  box-sizing: border-box;
}

body {
  position: relative;
  margin: 0;
  background: #fff;
  color: #000;
  font-family: "Noto Sans", "Noto Sans CJK SC", sans-serif;
  font-size: 12px;
  line-height: 16px;
}

h1,
h2 {
  margin: 0;
  font-weight: normal;
}

a {
  color: inherit;
  text-decoration: none;
}

button {
  display: flex;
  align-items: center;
  justify-content: center;
  padding: 0;
  border: 0;
  background: none;
}

button svg {
  width: 12px;
  height: 12px;
}

.defs {
  position: absolute;
  width: 0;
  height: 0;
}

.panel-icon {
  flex: none;
  width: 16px;
  height: 12px;
}

/* title bar */
.titlebar {
  display: flex;
  align-items: center;
  height: 24px;
  padding-left: 4px;
}

.titlebar h1 {
  margin-left: 5px;
  font-size: 12px;
}

.window-buttons {
  display: flex;
  gap: 18px;
  margin-left: auto;
}

.window-buttons button {
  width: 28px;
  height: 22px;
}

.window-buttons svg {
  width: 11px;
  height: 11px;
}

/* navigation */
.toolbar {
  display: flex;
  height: 31px;
  margin-top: 8px;
  padding-right: 3px;
}

.history {
  display: flex;
  width: 102px;
  padding-left: 9px;
}

.history button {
  width: 20px;
  justify-content: flex-start;
}

.history .back {
  width: 30px;
}

.history .recent {
  width: 24px;
  padding-left: 4px;
}

.address {
  display: flex;
  flex: 1;
  align-items: center;
  padding-left: 2px;
  border: 1px solid #d9d9d9;
}

.chevron {
  flex: none;
  width: 8px;
  height: 8px;
  margin: 0 8px;
}

.address .drop {
  width: 28px;
  height: 29px;
  margin-left: auto;
}

.address .refresh {
  width: 31px;
  height: 29px;
  border-left: 1px solid #d9d9d9;
}

.search {
  display: flex;
  width: 167px;
  margin-left: 12px;
  border: 1px solid #d9d9d9;
}

.search input {
  flex: 1;
  min-width: 0;
  padding: 0 0 0 9px;
  border: 0;
  outline: 0;
  font: inherit;
}

.search input::placeholder {
  color: #6d6d6d;
}

.search button {
  width: 28px;
}

/* heading */
.heading {
  display: flex;
  align-items: center;
  justify-content: space-between;
  height: 68px;
  padding: 5px 47px 0 13px;
  background: linear-gradient(90deg, #fff, #d3e4f0 4%, #d3e4f0 96%, #fff) bottom / 100% 1px no-repeat;
}

.heading h2 {
  color: #039;
  font-size: 16px;
}

.view-by {
  display: flex;
  align-items: center;
  width: 165px;
  height: 55px;
  padding-left: 16px;
  border: 3px solid #fe1f12;
  border-radius: 4px;
  color: #5a6b80;
}

.view-by label {
  width: 56px;
  font-size: 13px;
}

.view-by select {
  margin-left: 12px;
  padding: 0;
  border: 0;
  appearance: none;
  background: none;
  color: #06c;
  font: inherit;
}

.view-by::after {
  width: 8px;
  height: 4px;
  margin-left: 5px;
  background: #06c;
  clip-path: polygon(0 0, 100% 0, 50% 100%);
  content: "";
}

/* items */
.items {
  display: grid;
  grid-template-columns: repeat(auto-fill, 250px);
  grid-auto-rows: 50px;
  padding: 25px 0 0 15px;
}

.item {
  position: relative;
  display: flex;
  gap: 9px;
  align-items: center;
  padding-right: 14px;
  color: #006f12;
  font-size: 16px;
  line-height: 21px;
}

.item span {
  margin-bottom: 1px;
  padding: 0 1px;
  border: 1px solid transparent;
}

.item.focused span {
  border: 1px dotted #000;
  line-height: 20px;
}

.item.marked::before {
  position: absolute;
  top: -5px;
  left: -9px;
  width: 154px;
  height: 60px;
  border: 3px solid #fe1f12;
  border-radius: 4px;
  content: "";
}

.icon {
  flex: none;
  width: 32px;
  height: 32px;
  overflow: visible;
}

.font-letter {
  fill: #0a78c8;
  font-family: "Liberation Serif", serif;
  font-size: 22px;
  font-weight: bold;
}

/* site mark over the grid */
.watermark {
  position: absolute;
  top: 355px;
  left: 499px;
  display: flex;
  align-items: center;
  height: 20px;
}

.oval {
  width: 29px;
  height: 19px;
  border-radius: 50%;
  background: radial-gradient(#ff5a4c, #e01818);
  color: #fff;
  font-size: 13px;
  font-style: italic;
  line-height: 16px;
  text-align: center;
}

.site {
  margin-left: 2px;
  color: #111;
  font-size: 16px;
  font-weight: bold;
  font-style: italic;
  text-shadow: 1px 0 #fff, -1px 0 #fff, 0 1px #fff, 0 -1px #fff;
}
```
